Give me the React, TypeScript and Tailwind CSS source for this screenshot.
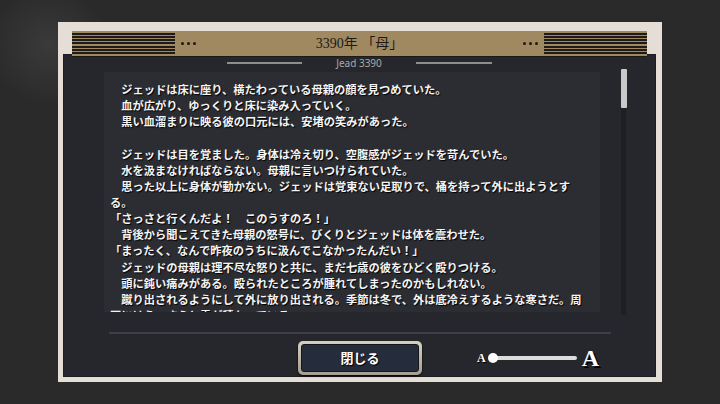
import React from "react";

const jp = { fontFamily: '"Noto Sans CJK JP", "Noto Sans", sans-serif' };
const serif = { fontFamily: '"Liberation Serif", "Noto Sans CJK JP", serif' };

function Stripes() {
  return (
    <div className="w-[103px] h-[24px] flex flex-col justify-between py-[1px]">
      {[0, 1, 2, 3, 4, 5, 6].map((i) => (
        <div key={i} className="h-[2px] bg-[#1f1c17]" />
      ))}
    </div>
  );
}

function Dots() {
  return (
    <div className="flex gap-[3px] items-center">
      <div className="w-[3px] h-[3px] rounded-full bg-[#1c1a16]" />
      <div className="w-[3px] h-[3px] rounded-full bg-[#1c1a16]" />
      <div className="w-[3px] h-[3px] rounded-full bg-[#1c1a16]" />
    </div>
  );
}

const lines = [
  "　ジェッドは床に座り、横たわっている母親の顔を見つめていた。",
  "　血が広がり、ゆっくりと床に染み入っていく。",
  "　黒い血溜まりに映る彼の口元には、安堵の笑みがあった。",
  "",
  "　ジェッドは目を覚ました。身体は冷え切り、空腹感がジェッドを苛んでいた。",
  "　水を汲まなければならない。母親に言いつけられていた。",
  "　思った以上に身体が動かない。ジェッドは覚束ない足取りで、桶を持って外に出ようとす",
  "る。",
  "「さっさと行くんだよ！　このうすのろ！」",
  "　背後から聞こえてきた母親の怒号に、びくりとジェッドは体を震わせた。",
  "「まったく、なんで昨夜のうちに汲んでこなかったんだい！」",
  "　ジェッドの母親は理不尽な怒りと共に、まだ七歳の彼をひどく殴りつける。",
  "　頭に鈍い痛みがある。殴られたところが腫れてしまったのかもしれない。",
  "　蹴り出されるようにして外に放り出される。季節は冬で、外は底冷えするような寒さだ。周",
  "囲にはうっすらと雪が積もっている。",
];

export default function App() {
  return (
    <div className="w-[720px] h-[404px] overflow-hidden flex pt-[22px] pl-[58px] bg-[#2a2a2a] bg-[radial-gradient(circle_at_48px_45px,#3a3a3a,#2a2a2a_60px)]">
      <div className="w-[604px] h-[360px] bg-[#e4ded6] flex flex-col pt-[9px] pl-[5px] pr-[6px] pb-[5px]">
        {/* header band */}
        <div className="relative z-10 mx-[9px] h-[26px] mb-[-3px] bg-[#a08861] border-b border-[#1c1a16] flex items-center">
          <Stripes />
          <div className="ml-[6px]">
            <Dots />
          </div>
          <div
            className="flex-1 text-center text-[14px] leading-none text-[#1b1a17]"
            style={serif}
          >
            3390年 「母」
          </div>
          <div className="mr-[6px]">
            <Dots />
          </div>
          <Stripes />
        </div>

        {/* dark panel */}
        <div className="flex-1 bg-[#26272c] border border-[#1c1d21] flex flex-col">
          <div className="mt-[2px] h-[12px] flex items-center justify-center gap-[34px]">
            <div className="w-[75px] h-[2px] bg-[#8e8e8e]" />
            <span
              className="text-[10px] leading-none text-[#a8a8a8]"
              style={{ fontFamily: '"Noto Sans", "Open Sans", sans-serif' }}
            >
              Jead 3390
            </span>
            <div className="w-[76px] h-[2px] bg-[#8e8e8e]" />
          </div>

          <div className="flex mt-[3px]">
            <div
              className="ml-[40px] w-[496px] h-[240px] bg-[#2c2d33] overflow-hidden pl-[6px] pt-[9px] text-[11.25px] leading-[16.15px] font-bold text-[#f4f4f4] [text-shadow:1px_1px_1px_#000]"
              style={jp}
            >
              {lines.map((l, i) => (
                <div key={i} className="whitespace-nowrap h-[16.15px]">
                  {l}
                </div>
              ))}
            </div>
            <div className="ml-[21px] mt-[-3px] w-[5px] h-[246px] bg-[#1e1f23]">
              <div className="w-[6px] h-[39px] bg-[#c9c9c9] rounded-[1px]" />
            </div>
          </div>

          <div className="mt-[17px] ml-[45px] w-[502px] h-[2px] bg-[#3c4149]" />

          <div className="mt-[7px] flex items-center">
            <div className="ml-[234px] w-[124px] h-[34px] rounded-[5px] p-[3px] bg-[linear-gradient(180deg,#d6d0c3,#a59e8e)] shadow-[0_1px_2px_#000]">
              <div
                className="w-full h-full rounded-[3px] bg-[#252c3b] border border-[#15171d] flex items-center justify-center text-[13px] text-white font-bold [text-shadow:1px_1px_1px_#000]"
                style={jp}
              >
                閉じる
              </div>
            </div>

            <div className="ml-[55px] flex items-center">
              <span
                className="text-[12px] leading-none font-bold text-white [text-shadow:1px_1px_0_#000]"
                style={serif}
              >
                A
              </span>
              <div className="relative ml-[2px] w-[89px] h-[10px]">
                <div className="absolute left-[5px] right-0 top-[3px] h-[4px] rounded-full bg-[#dcdcdc]" />
                <div className="absolute left-0 top-0 w-[10px] h-[10px] rounded-full bg-white" />
              </div>
              <span
                className="ml-[5px] text-[24px] leading-none font-bold text-white [text-shadow:2px_2px_0_#000]"
                style={serif}
              >
                A
              </span>
            </div>
          </div>
        </div>
      </div>
    </div>
  );
}
